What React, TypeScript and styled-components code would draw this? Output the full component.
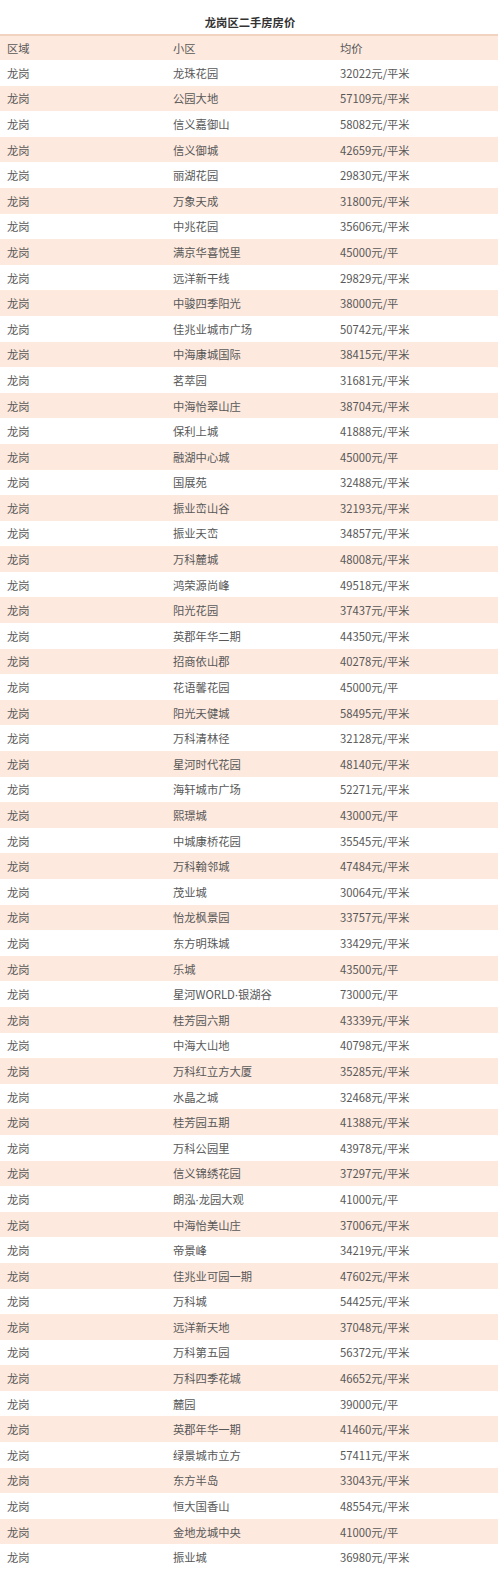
import React from "react";
import styled, { createGlobalStyle } from "styled-components";

const Global = createGlobalStyle`
  html, body { margin: 0; padding: 0; background: #ffffff; }
  body { font-family: "Microsoft YaHei", "Noto Sans CJK SC", "Noto Sans", sans-serif; }
`;

const Page = styled.div`
  width: 500px;
  display: flex;
  flex-direction: column;
`;

const Title = styled.div`
  padding-top: 10px;
  height: 24px;
  line-height: 24px;
  text-align: center;
  font-size: 11.3px;
  font-weight: 700;
  color: #333333;
`;

const Table = styled.div`
  width: 498px;
  display: flex;
  flex-direction: column;
  border-top: 2px solid #f2d3bf;
`;

const Row = styled.div<{ $shade: boolean; $h: number }>`
  display: grid;
  grid-template-columns: 166px 167px 165px;
  height: ${(p) => p.$h}px;
  align-items: center;
  background: ${(p) => (p.$shade ? "#fde9de" : "#ffffff")};
`;

const Cell = styled.div`
  padding-left: 7px;
  font-size: 11.3px;
  color: #585858;
  white-space: nowrap;
`;

const Dot = styled.span`
  font-family: "Noto Sans", "DejaVu Sans", sans-serif;
`;

const data: [string, string][] = [
  ["龙珠花园", "32022元/平米"],
  ["公园大地", "57109元/平米"],
  ["信义嘉御山", "58082元/平米"],
  ["信义御城", "42659元/平米"],
  ["丽湖花园", "29830元/平米"],
  ["万象天成", "31800元/平米"],
  ["中兆花园", "35606元/平米"],
  ["满京华喜悦里", "45000元/平"],
  ["远洋新干线", "29829元/平米"],
  ["中骏四季阳光", "38000元/平"],
  ["佳兆业城市广场", "50742元/平米"],
  ["中海康城国际", "38415元/平米"],
  ["茗萃园", "31681元/平米"],
  ["中海怡翠山庄", "38704元/平米"],
  ["保利上城", "41888元/平米"],
  ["融湖中心城", "45000元/平"],
  ["国展苑", "32488元/平米"],
  ["振业峦山谷", "32193元/平米"],
  ["振业天峦", "34857元/平米"],
  ["万科麓城", "48008元/平米"],
  ["鸿荣源尚峰", "49518元/平米"],
  ["阳光花园", "37437元/平米"],
  ["英郡年华二期", "44350元/平米"],
  ["招商依山郡", "40278元/平米"],
  ["花语馨花园", "45000元/平"],
  ["阳光天健城", "58495元/平米"],
  ["万科清林径", "32128元/平米"],
  ["星河时代花园", "48140元/平米"],
  ["海轩城市广场", "52271元/平米"],
  ["熙璟城", "43000元/平"],
  ["中城康桥花园", "35545元/平米"],
  ["万科翰邻城", "47484元/平米"],
  ["茂业城", "30064元/平米"],
  ["怡龙枫景园", "33757元/平米"],
  ["东方明珠城", "33429元/平米"],
  ["乐城", "43500元/平"],
  ["星河WORLD·银湖谷", "73000元/平"],
  ["桂芳园六期", "43339元/平米"],
  ["中海大山地", "40798元/平米"],
  ["万科红立方大厦", "35285元/平米"],
  ["水晶之城", "32468元/平米"],
  ["桂芳园五期", "41388元/平米"],
  ["万科公园里", "43978元/平米"],
  ["信义锦绣花园", "37297元/平米"],
  ["朗泓·龙园大观", "41000元/平"],
  ["中海怡美山庄", "37006元/平米"],
  ["帝景峰", "34219元/平米"],
  ["佳兆业可园一期", "47602元/平米"],
  ["万科城", "54425元/平米"],
  ["远洋新天地", "37048元/平米"],
  ["万科第五园", "56372元/平米"],
  ["万科四季花城", "46652元/平米"],
  ["麓园", "39000元/平"],
  ["英郡年华一期", "41460元/平米"],
  ["绿景城市立方", "57411元/平米"],
  ["东方半岛", "33043元/平米"],
  ["恒大国香山", "48554元/平米"],
  ["金地龙城中央", "41000元/平"],
  ["振业城", "36980元/平米"],
];

function Name({ text }: { text: string }) {
  const parts = text.split("·");
  return (
    <>
      {parts.map((p, i) => (
        <React.Fragment key={i}>
          {i > 0 && <Dot>·</Dot>}
          {p}
        </React.Fragment>
      ))}
    </>
  );
}

export default function App() {
  return (
    <Page>
      <Global />
      <Title>龙岗区二手房房价</Title>
      <Table>
        <Row $shade={true} $h={24}>
          <Cell>区域</Cell>
          <Cell>小区</Cell>
          <Cell>均价</Cell>
        </Row>
        {data.map(([name, price], i) => (
          <Row key={i} $shade={i % 2 === 1} $h={25.6}>
            <Cell>龙岗</Cell>
            <Cell>
              <Name text={name} />
            </Cell>
            <Cell>{price}</Cell>
          </Row>
        ))}
      </Table>
    </Page>
  );
}
